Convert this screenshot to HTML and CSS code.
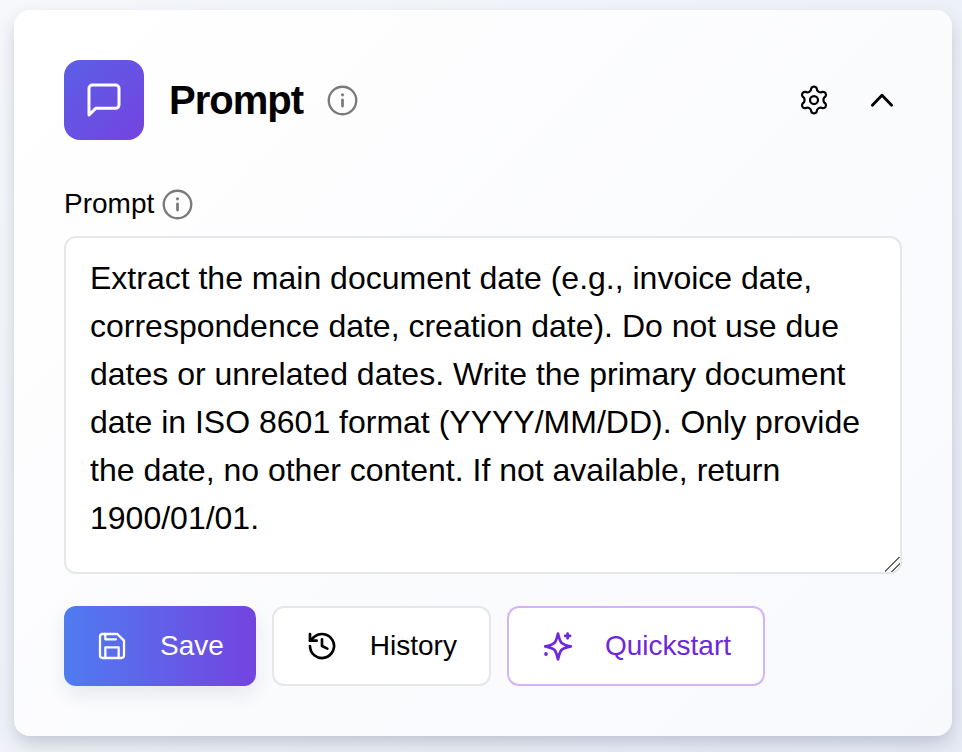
FILE: index.html
```html
<!DOCTYPE html>
<html lang="en">
<head>
  <meta charset="UTF-8">
  <title>Prompt</title>
  <link rel="stylesheet" href="styles.css">
</head>
<body>
  <div class="card">
    <!-- Header -->
    <div class="header">
      <div class="header-icon">
        <svg width="40" height="40" viewBox="0 0 24 24" fill="none" stroke="#fff" stroke-width="1.8" stroke-linecap="round" stroke-linejoin="round">
          <path d="M21 15a2 2 0 0 1-2 2H7l-4 4V5a2 2 0 0 1 2-2h14a2 2 0 0 1 2 2z"/>
        </svg>
      </div>
      <h1 class="title">Prompt</h1>
      <svg class="info" width="33" height="33" viewBox="0 0 24 24" fill="none" stroke="#7a7a7a" stroke-width="1.7" stroke-linecap="round">
        <circle cx="12" cy="12" r="10"/>
        <path d="M12 11.5v4.5" stroke-width="2"/>
        <path d="M12 7.8v.1" stroke-width="2.2"/>
      </svg>
      <div class="header-actions">
        <svg width="30" height="30" viewBox="0 0 24 24" fill="none" stroke="#000" stroke-width="1.8" stroke-linecap="round" stroke-linejoin="round">
          <path d="M9.84 2.65A2.4 2.4 0 0 1 14.16 2.65A3.2 3.2 0 0 0 19.02 5.45A2.4 2.4 0 0 1 21.18 9.19A3.2 3.2 0 0 0 21.18 14.81A2.4 2.4 0 0 1 19.02 18.55A3.2 3.2 0 0 0 14.16 21.35A2.4 2.4 0 0 1 9.84 21.35A3.2 3.2 0 0 0 4.98 18.55A2.4 2.4 0 0 1 2.82 14.81A3.2 3.2 0 0 0 2.82 9.19A2.4 2.4 0 0 1 4.98 5.45A3.2 3.2 0 0 0 9.84 2.65Z"/>
          <circle cx="12" cy="12" r="3.2"/>
        </svg>
        <svg width="34" height="34" viewBox="0 0 24 24" fill="none" stroke="#000" stroke-width="2" stroke-linecap="round" stroke-linejoin="round">
          <path d="M5.2 15.7L12 8.7l6.8 7"/>
        </svg>
      </div>
    </div>

    <!-- Prompt field -->
    <div class="field-label">
      <span>Prompt</span>
      <svg class="info" width="33" height="33" viewBox="0 0 24 24" fill="none" stroke="#7a7a7a" stroke-width="1.7" stroke-linecap="round">
        <circle cx="12" cy="12" r="10"/>
        <path d="M12 11.5v4.5" stroke-width="2"/>
        <path d="M12 7.8v.1" stroke-width="2.2"/>
      </svg>
    </div>
    <textarea class="prompt-input">Extract the main document date (e.g., invoice date, correspondence date, creation date). Do not use due dates or unrelated dates. Write the primary document date in ISO 8601 format (YYYY/MM/DD). Only provide the date, no other content. If not available, return 1900/01/01.</textarea>

    <!-- Buttons -->
    <div class="actions">
      <button class="btn save-btn">
        <svg width="32" height="32" viewBox="0 0 24 24" fill="none" stroke="#fff" stroke-width="1.7" stroke-linecap="round" stroke-linejoin="round">
          <path d="M19 21H5a2 2 0 0 1-2-2V5a2 2 0 0 1 2-2h11l5 5v11a2 2 0 0 1-2 2z"/>
          <path d="M17 21v-8H7v8"/>
          <path d="M7 3v4h8"/>
        </svg>
        Save
      </button>
      <button class="btn history-btn">
        <svg width="32" height="32" viewBox="0 0 24 24" fill="none" stroke="#000" stroke-width="2" stroke-linecap="round" stroke-linejoin="round">
          <path d="M3 12a9 9 0 1 0 3-6.7L3 8"/>
          <path d="M3 3v5h5"/>
          <path d="M12 7v5l4 2"/>
        </svg>
        History
      </button>
      <button class="btn quickstart-btn">
        <svg width="34" height="34" viewBox="0 0 24 24" fill="none" stroke="#6d28d9" stroke-width="1.9" stroke-linecap="round" stroke-linejoin="round">
          <path d="M12 3.2C12.8 6.4 13.200 8.600 14.600 9.900C15.900 11.100 18 11.700 21 12.300C18 12.900 15.900 13.500 14.600 14.700C13.200 16 12.800 18.200 12 21.400C11.200 18.200 10.800 16 9.400 14.700C8.100 13.500 6 12.900 3 12.300C6 11.700 8.100 11.100 9.400 9.900C10.800 8.600 11.200 6.400 12 3.200Z"/>
          <path d="M18.800 3.200v3.400"/>
          <path d="M17.100 4.900h3.400"/>
          <path d="M3.500 17.600v.1" stroke-width="2.600"/>
        </svg>
        Quickstart
      </button>
    </div>
  </div>
</body>
</html>
```

FILE: styles.css
```css
* {
  box-sizing: border-box;
}

html, body {
  margin: 0;
  padding: 0;
  height: 100%;
  overflow: hidden;
}

body {
  padding: 10px 10px 16px 14px;
  font-family: "Liberation Sans", Arial, sans-serif;
  color: #000;
  background: linear-gradient(135deg, #f6f8fb 0%, #e6ebf5 100%);
}

.card {
  display: flex;
  flex-direction: column;
  height: 726px;
  padding: 50px;
  background: linear-gradient(135deg, #ffffff 0%, #f8f9fd 100%);
  border-radius: 16px;
  box-shadow: 0 8px 18px -2px rgba(50, 60, 90, 0.26);
}

.header {
  display: flex;
  align-items: center;
  height: 80px;
}

.header-icon {
  display: flex;
  align-items: center;
  justify-content: center;
  width: 80px;
  height: 80px;
  margin-right: 25px;
  border-radius: 16px;
  background: linear-gradient(135deg, #5b5fe6 0%, #7443e0 100%);
}

.title {
  margin: 0 23px 0 0;
  font-size: 40px;
  font-weight: 700;
  letter-spacing: -1px;
}

.header-actions {
  display: flex;
  align-items: center;
  gap: 36px;
  margin-left: auto;
  margin-right: 3px;
}

.field-label {
  display: flex;
  align-items: center;
  gap: 7px;
  margin-top: 47px;
  height: 34px;
  font-size: 28px;
}

.prompt-input {
  display: block;
  width: 100%;
  height: 338px;
  margin-top: 15px;
  padding: 16px 24px;
  border: 2px solid #e5e7eb;
  border-radius: 12px;
  background: #fff;
  font-family: inherit;
  font-size: 32px;
  line-height: 48px;
  color: #000;
  outline: none;
}

.prompt-input::-webkit-resizer {
  background: linear-gradient(135deg, transparent 44%, #666 44% 52%, transparent 52% 68%, #666 68% 76%, transparent 76%);
}

.actions {
  display: flex;
  gap: 16px;
  margin-top: 32px;
}

.btn {
  display: flex;
  align-items: center;
  height: 80px;
  padding: 0 32px;
  gap: 32px;
  border-radius: 12px;
  font-family: inherit;
  font-size: 28px;
  cursor: pointer;
}

.save-btn {
  border: none;
  color: #fff;
  background: linear-gradient(90deg, #4f7cf0 0%, #7443e0 100%);
  box-shadow: 0 10px 20px rgba(60, 70, 100, 0.1);
}

.history-btn {
  border: 2px solid #e5e7eb;
  background: #fff;
  color: #000;
}

.quickstart-btn {
  gap: 30px;
  border: 2px solid #d2b4fb;
  background: #fff;
  color: #6d28d9;
}
```
